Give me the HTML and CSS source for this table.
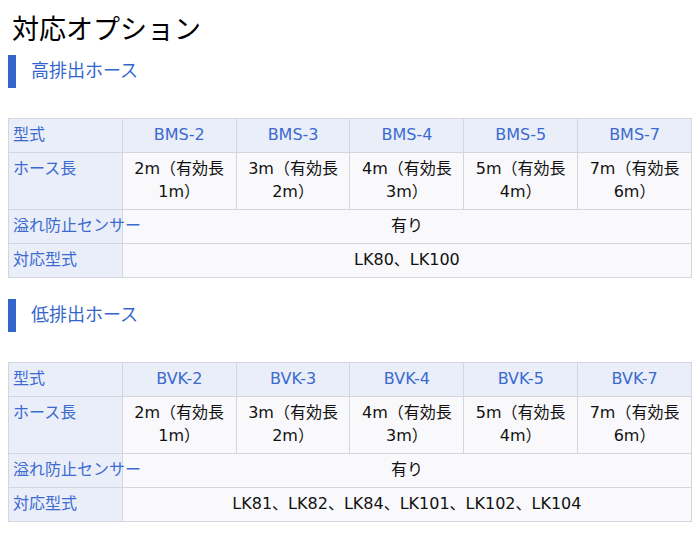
FILE: index.html
```html
<!DOCTYPE html>
<html lang="ja">
<head>
<meta charset="utf-8">
<link rel="stylesheet" href="styles.css">
</head>
<body>
<h1 class="title">対応オプション</h1>

<h2 class="sec">高排出ホース</h2>
<table class="spec">
  <tr><th>型式</th><td class="model">BMS-2</td><td class="model">BMS-3</td><td class="model">BMS-4</td><td class="model">BMS-5</td><td class="model">BMS-7</td></tr>
  <tr><th>ホース長</th><td>2m（有効長<br>1m）</td><td>3m（有効長<br>2m）</td><td>4m（有効長<br>3m）</td><td>5m（有効長<br>4m）</td><td>7m（有効長<br>6m）</td></tr>
  <tr><th>溢れ防止センサー</th><td colspan="5">有り</td></tr>
  <tr><th>対応型式</th><td colspan="5">LK80、LK100</td></tr>
</table>

<h2 class="sec">低排出ホース</h2>
<table class="spec">
  <tr><th>型式</th><td class="model">BVK-2</td><td class="model">BVK-3</td><td class="model">BVK-4</td><td class="model">BVK-5</td><td class="model">BVK-7</td></tr>
  <tr><th>ホース長</th><td>2m（有効長<br>1m）</td><td>3m（有効長<br>2m）</td><td>4m（有効長<br>3m）</td><td>5m（有効長<br>4m）</td><td>7m（有効長<br>6m）</td></tr>
  <tr><th>溢れ防止センサー</th><td colspan="5">有り</td></tr>
  <tr><th>対応型式</th><td colspan="5">LK81、LK82、LK84、LK101、LK102、LK104</td></tr>
</table>
</body>
</html>
```
FILE: styles.css
```css
html, body {
  margin: 0;
  padding: 0;
  background: #ffffff;
}
body {
  padding: 8px 4px 0 8px;
  font-family: "DejaVu Sans", "Noto Sans CJK JP", sans-serif;
  color: #111111;
}
.title {
  margin: 0;
  padding-left: 4px;
  font-size: 27px;
  line-height: 40px;
  font-weight: normal;
  color: #000000;
  font-family: "Noto Sans CJK JP", sans-serif;
}
.sec {
  margin: 7px 0 30px 0;
  height: 33px;
  line-height: 31px;
  border-left: 8px solid #3366cc;
  padding-left: 15px;
  font-size: 18px;
  font-weight: normal;
  color: #3366cc;
}
.spec + .sec {
  margin-top: 21px;
}
.spec {
  width: 684px;
  table-layout: fixed;
  border-collapse: collapse;
  border: 1px solid #d3d6df;
  font-size: 16px;
  line-height: 23px;
}
.spec th, .spec td {
  border: 1px solid #d3d6df;
  padding: 4px 4px 6px 4px;
  vertical-align: top;
}
.spec th {
  background: #eaeef9;
  color: #3b6ad0;
  font-weight: normal;
  text-align: left;
  white-space: nowrap;
  overflow: visible;
}
.spec td {
  background: #f9f9fb;
  text-align: center;
  color: #111111;
}
.spec td.model {
  background: #eaeef9;
  color: #3b6ad0;
}
```
